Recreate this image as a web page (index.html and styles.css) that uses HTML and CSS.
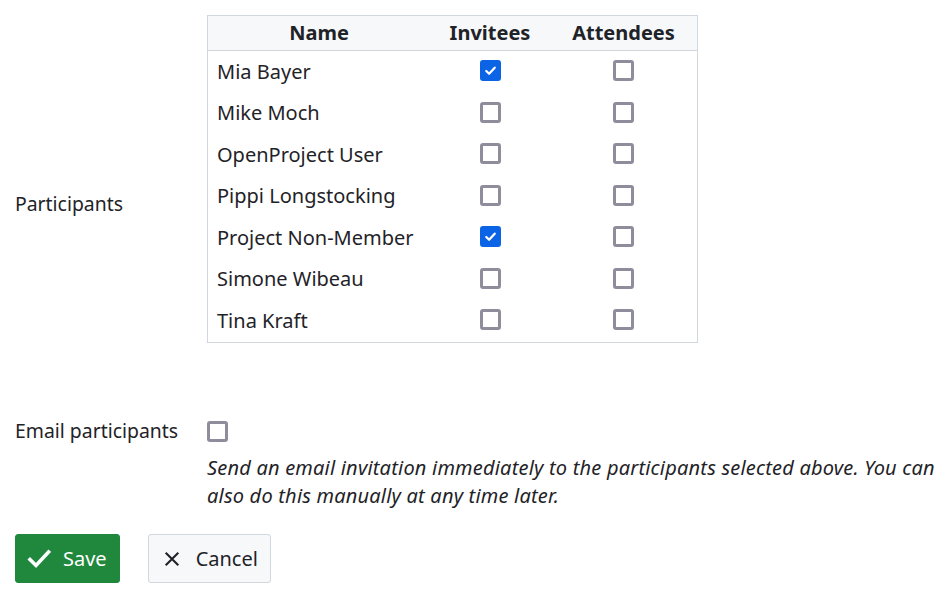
FILE: index.html
```html
<!DOCTYPE html>
<html>
<head>
<meta charset="utf-8">
<link rel="stylesheet" href="styles.css">
</head>
<body>
<form class="form">
  <div class="field">
    <div class="label label-participants">Participants</div>
    <div class="control">
      <table class="ptable">
        <thead>
          <tr><th class="c-name">Name</th><th class="c-inv">Invitees</th><th class="c-att">Attendees</th></tr>
        </thead>
        <tbody>
          <tr><td class="name">Mia Bayer</td><td class="cb"><span class="box checked"><svg viewBox="0 0 16 16" width="15" height="15"><path d="M3.5 8.5l3 3 6-6.5" fill="none" stroke="#fff" stroke-width="2.4" stroke-linecap="round" stroke-linejoin="round"/></svg></span></td><td class="cb"><span class="box"></span></td></tr>
          <tr><td class="name">Mike Moch</td><td class="cb"><span class="box"></span></td><td class="cb"><span class="box"></span></td></tr>
          <tr><td class="name">OpenProject User</td><td class="cb"><span class="box"></span></td><td class="cb"><span class="box"></span></td></tr>
          <tr><td class="name">Pippi Longstocking</td><td class="cb"><span class="box"></span></td><td class="cb"><span class="box"></span></td></tr>
          <tr><td class="name">Project Non-Member</td><td class="cb"><span class="box checked"><svg viewBox="0 0 16 16" width="15" height="15"><path d="M3.5 8.5l3 3 6-6.5" fill="none" stroke="#fff" stroke-width="2.4" stroke-linecap="round" stroke-linejoin="round"/></svg></span></td><td class="cb"><span class="box"></span></td></tr>
          <tr><td class="name">Simone Wibeau</td><td class="cb"><span class="box"></span></td><td class="cb"><span class="box"></span></td></tr>
          <tr><td class="name">Tina Kraft</td><td class="cb"><span class="box"></span></td><td class="cb"><span class="box"></span></td></tr>
        </tbody>
      </table>
    </div>
  </div>
  <div class="field field-email">
    <div class="label label-email">Email participants</div>
    <div class="control">
      <span class="box email-box"></span>
      <p class="hint">Send an email invitation immediately to the participants selected above. You can also do this manually at any time later.</p>
    </div>
  </div>
  <div class="actions">
    <button type="button" class="btn btn-save">
      <svg class="icon" viewBox="0 0 24 24" width="24" height="24"><path d="M3 12.5l6 6L21.5 5" fill="none" stroke="#fff" stroke-width="3.6" stroke-linecap="square" stroke-linejoin="miter"/></svg>
      <span>Save</span>
    </button>
    <button type="button" class="btn btn-cancel">
      <svg class="icon" viewBox="0 0 20 20" width="18" height="18"><path d="M3 3l14 14M17 3L3 17" fill="none" stroke="#1f2328" stroke-width="2.3"/></svg>
      <span>Cancel</span>
    </button>
  </div>
</form>
</body>
</html>
```

FILE: styles.css
```css
html, body {
  margin: 0;
  padding: 0;
  background: #ffffff;
}
body {
  font-family: "Noto Sans", "Open Sans", sans-serif;
  font-size: 20px;
  color: #1f2328;
  padding: 15px 0 15px 15px;
}
.form {
  display: flex;
  flex-direction: column;
}
.field {
  display: grid;
  grid-template-columns: 192px 1fr;
}
.label {
  line-height: 28px;
}
.label-participants {
  padding-top: 175px;
  font-size: 19.4px;
}
.ptable {
  border-collapse: collapse;
  border: 1px solid #d0d7de;
  width: 491px;
  table-layout: fixed;
}
.ptable th {
  background: #f6f8fa;
  font-weight: 700;
  height: 34px;
  padding: 0;
  border-bottom: 1px solid #d0d7de;
  text-align: center;
  line-height: 28px;
}
.c-name { width: 222px; }
.c-inv { width: 120px; }
.c-att { width: 147px; }
.ptable td {
  height: 41.5px;
  padding: 0;
  line-height: 28px;
  vertical-align: middle;
}
.ptable td.name {
  padding-left: 9px;
}
.ptable td.cb .box {
  display: flex;
  margin: -2px auto 0 auto;
}
.box {
  display: inline-flex;
  align-items: center;
  justify-content: center;
  box-sizing: border-box;
  width: 21px;
  height: 21px;
  border: 3px solid #8f8d9b;
  border-radius: 3px;
  background: #fff;
}
.box.checked {
  background: #0b63e5;
  border-color: #0b63e5;
}
.field-email {
  margin-top: 72px;
}
.label-email {
  padding-top: 2px;
  font-size: 19.4px;
}
.control {
  min-width: 0;
}
.email-box {
  display: flex;
  margin-top: 6px;
}
.hint {
  margin: 12px 0 0 0;
  font-style: italic;
  font-size: 20px;
  letter-spacing: 0.2px;
  line-height: 28px;
  max-width: 744px;
}
.actions {
  display: flex;
  gap: 28px;
  margin-top: 24px;
}
.btn {
  display: inline-flex;
  align-items: center;
  box-sizing: border-box;
  height: 49px;
  border-radius: 3px;
  font-family: "Noto Sans", "Open Sans", sans-serif;
  font-size: 20px;
  cursor: pointer;
  padding-top: 2px;
}
.btn-save {
  background: #1f883d;
  border: 1px solid #1f883d;
  color: #ffffff;
  padding-left: 11px;
  padding-right: 12px;
  gap: 12px;
}
.btn-cancel {
  background: #f6f8fa;
  border: 1px solid #d0d7de;
  color: #1f2328;
  padding-left: 14px;
  padding-right: 12px;
  gap: 15px;
}
```
